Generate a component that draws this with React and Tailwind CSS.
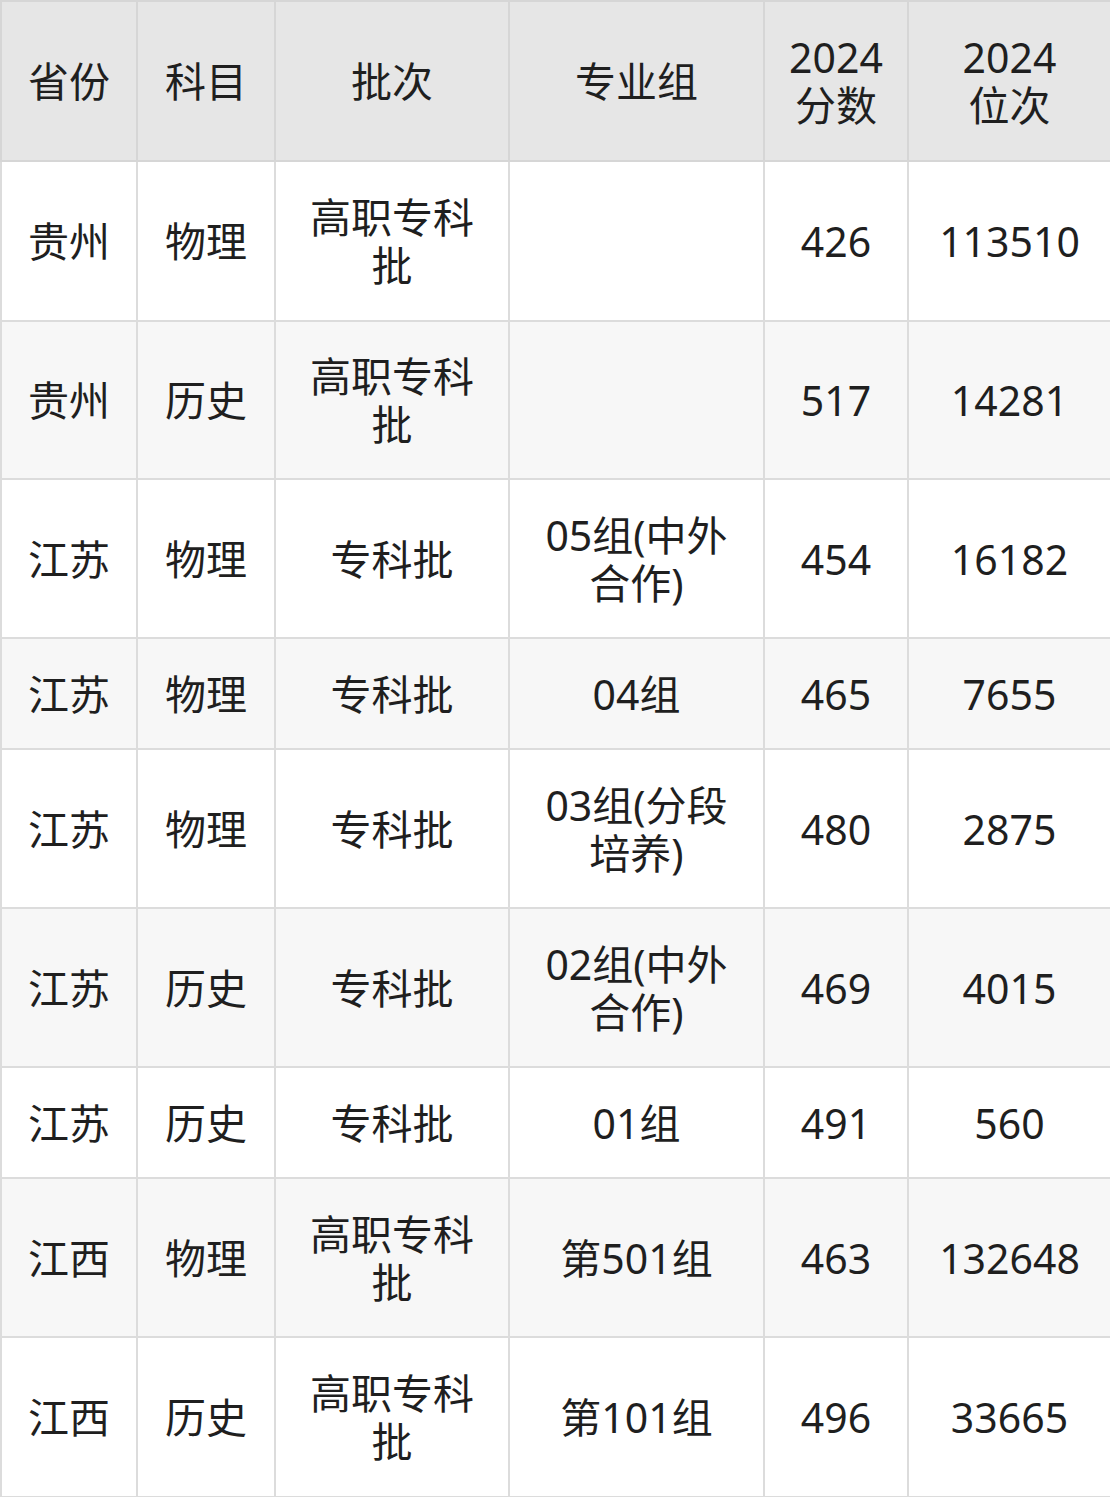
import React from 'react';

const rows = [
  { h: 'h-[160px]', cells: ['贵州', '物理', ['高职专科', '批'], '', '426', '113510'] },
  { h: 'h-[158px]', cells: ['贵州', '历史', ['高职专科', '批'], '', '517', '14281'] },
  { h: 'h-[159px]', cells: ['江苏', '物理', '专科批', ['05组(中外', '合作)'], '454', '16182'] },
  { h: 'h-[111px]', cells: ['江苏', '物理', '专科批', '04组', '465', '7655'] },
  { h: 'h-[159px]', cells: ['江苏', '物理', '专科批', ['03组(分段', '培养)'], '480', '2875'] },
  { h: 'h-[159px]', cells: ['江苏', '历史', '专科批', ['02组(中外', '合作)'], '469', '4015'] },
  { h: 'h-[111px]', cells: ['江苏', '历史', '专科批', '01组', '491', '560'] },
  { h: 'h-[159px]', cells: ['江西', '物理', ['高职专科', '批'], '第501组', '463', '132648'] },
  { h: 'h-[160px]', cells: ['江西', '历史', ['高职专科', '批'], '第101组', '496', '33665'] },
];

const widths = ['w-[136px]', 'w-[138px]', 'w-[234px]', 'w-[255px]', 'w-[144px]', 'w-[203px]'];

function Cell({ value }) {
  if (Array.isArray(value)) {
    return value.map((line, i) => (
      <span key={i} className="block">
        {line}
      </span>
    ));
  }
  return value;
}

export default function App() {
  return (
    <div
      className="w-[1110px] h-[1497px] bg-white text-[#1f1f1f]"
      style={{ fontFamily: '"Noto Sans", "Noto Sans CJK SC", sans-serif' }}
    >
      <table className="w-[1110px] table-fixed border-collapse text-[41px] leading-[48px] text-center">
        <colgroup>
          {widths.map((w, i) => (
            <col key={i} className={w} />
          ))}
        </colgroup>
        <thead>
          <tr className="h-[160px] bg-[#e6e6e6]">
            {['省份', '科目', '批次', '专业组', ['2024', '分数'], ['2024', '位次']].map((v, i) => (
              <th key={i} className="border-2 border-[#d6d6d6] font-normal p-0 align-middle">
                <Cell value={v} />
              </th>
            ))}
          </tr>
        </thead>
        <tbody>
          {rows.map((row, r) => (
            <tr key={r} className={`${row.h} ${r % 2 === 1 ? 'bg-[#f7f7f7]' : 'bg-white'}`}>
              {row.cells.map((v, i) => (
                <td key={i} className="border-2 border-[#dcdcdc] p-0 align-middle">
                  <Cell value={v} />
                </td>
              ))}
            </tr>
          ))}
        </tbody>
      </table>
    </div>
  );
}
